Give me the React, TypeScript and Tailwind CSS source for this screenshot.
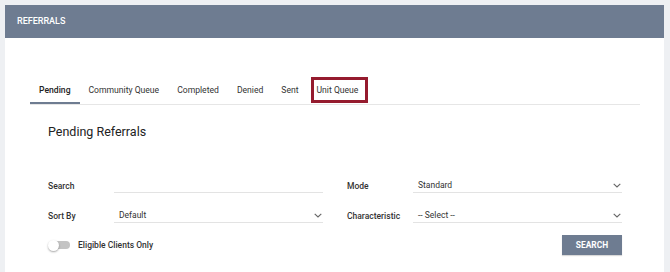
import React from "react"

const tabs = ["Pending", "Community Queue", "Completed", "Denied", "Sent", "Unit Queue"]

function Chevron() {
  return (
    <svg width="8" height="5" viewBox="0 0 8 5" className="shrink-0">
      <polyline points="0.7,0.8 4,4 7.3,0.8" fill="none" stroke="#666" strokeWidth="1.1" />
    </svg>
  )
}

function Field({ label, value, select }: { label: string; value?: string; select?: boolean }) {
  return (
    <div className="flex items-end">
      <div className="w-[66px] text-[8.5px] font-medium text-[#333] pb-[1px] leading-[12px]">{label}</div>
      <div className="flex-1 h-[16px] flex items-center justify-between border-b border-[#e3e3e3] pl-[5px] pr-[1px] pt-[2px]">
        <span className="text-[8.5px] text-[#333]">{value}</span>
        {select && <Chevron />}
      </div>
    </div>
  )
}

export default function App() {
  return (
    <div className="min-h-[272px] bg-[#eef0f3] pt-[5px] pl-[5px] pr-[6px]" style={{ fontFamily: "Roboto, 'Liberation Sans', sans-serif" }}>
      <div className="bg-white w-[659px] min-h-[267px]">
        {/* Header */}
        <div className="h-[33px] bg-[#6e7c91] flex items-center pl-[12px]">
          <span className="text-[9px] font-medium text-white">REFERRALS</span>
        </div>

        {/* Tabs */}
        <div className="mt-[41px] ml-[25px] mr-[24px] flex border-b border-[#e6e6e6]">
          {tabs.map((t, i) => (
            <div
              key={t}
              className={
                i === 0
                  ? "relative h-[25px] px-[9px] flex items-center text-[8.6px] font-medium text-[#222] border-b-2 border-[#6e7c91]"
                  : "relative h-[25px] px-[9px] flex items-center text-[8.6px] text-[#333] border-b-2 border-transparent"
              }
            >
              {t}
              {t === "Unit Queue" && (
                <span className="absolute -top-[2px] left-[3px] -right-[1px] -bottom-[1px] border-[3px] border-[#951b2e] pointer-events-none" />
              )}
            </div>
          ))}
        </div>

        {/* Title */}
        <div className="mt-[19px] ml-[43px] text-[12.5px] text-[#222] leading-[15px]">Pending Referrals</div>

        {/* Form */}
        <div className="mt-[38px] ml-[43px] w-[574px] grid grid-cols-2 gap-x-[24px] gap-y-[14px]">
          <Field label="Search" />
          <Field label="Mode" value="Standard" select />
          <Field label="Sort By" value="Default" select />
          <Field label="Characteristic" value="-- Select --" select />
        </div>

        <div className="mt-[12px] ml-[43px] w-[574px] flex items-center justify-between">
          <div className="flex items-center">
            <div className="relative w-[22px] h-[11px] flex items-center">
              <div className="ml-[4px] w-[18px] h-[8px] rounded-full bg-[#c4c4c4]" />
              <div className="absolute left-0 top-0 w-[11px] h-[11px] rounded-full bg-white shadow-[0_1px_2px_rgba(0,0,0,0.35)]" />
            </div>
            <span className="ml-[8px] text-[8.5px] font-medium text-[#333]">Eligible Clients Only</span>
          </div>
          <button className="w-[60px] h-[20px] bg-[#6e7c91] text-white text-[8.4px] font-bold shadow-[0_1px_1px_rgba(0,0,0,0.15)]">
            SEARCH
          </button>
        </div>
      </div>
    </div>
  )
}
